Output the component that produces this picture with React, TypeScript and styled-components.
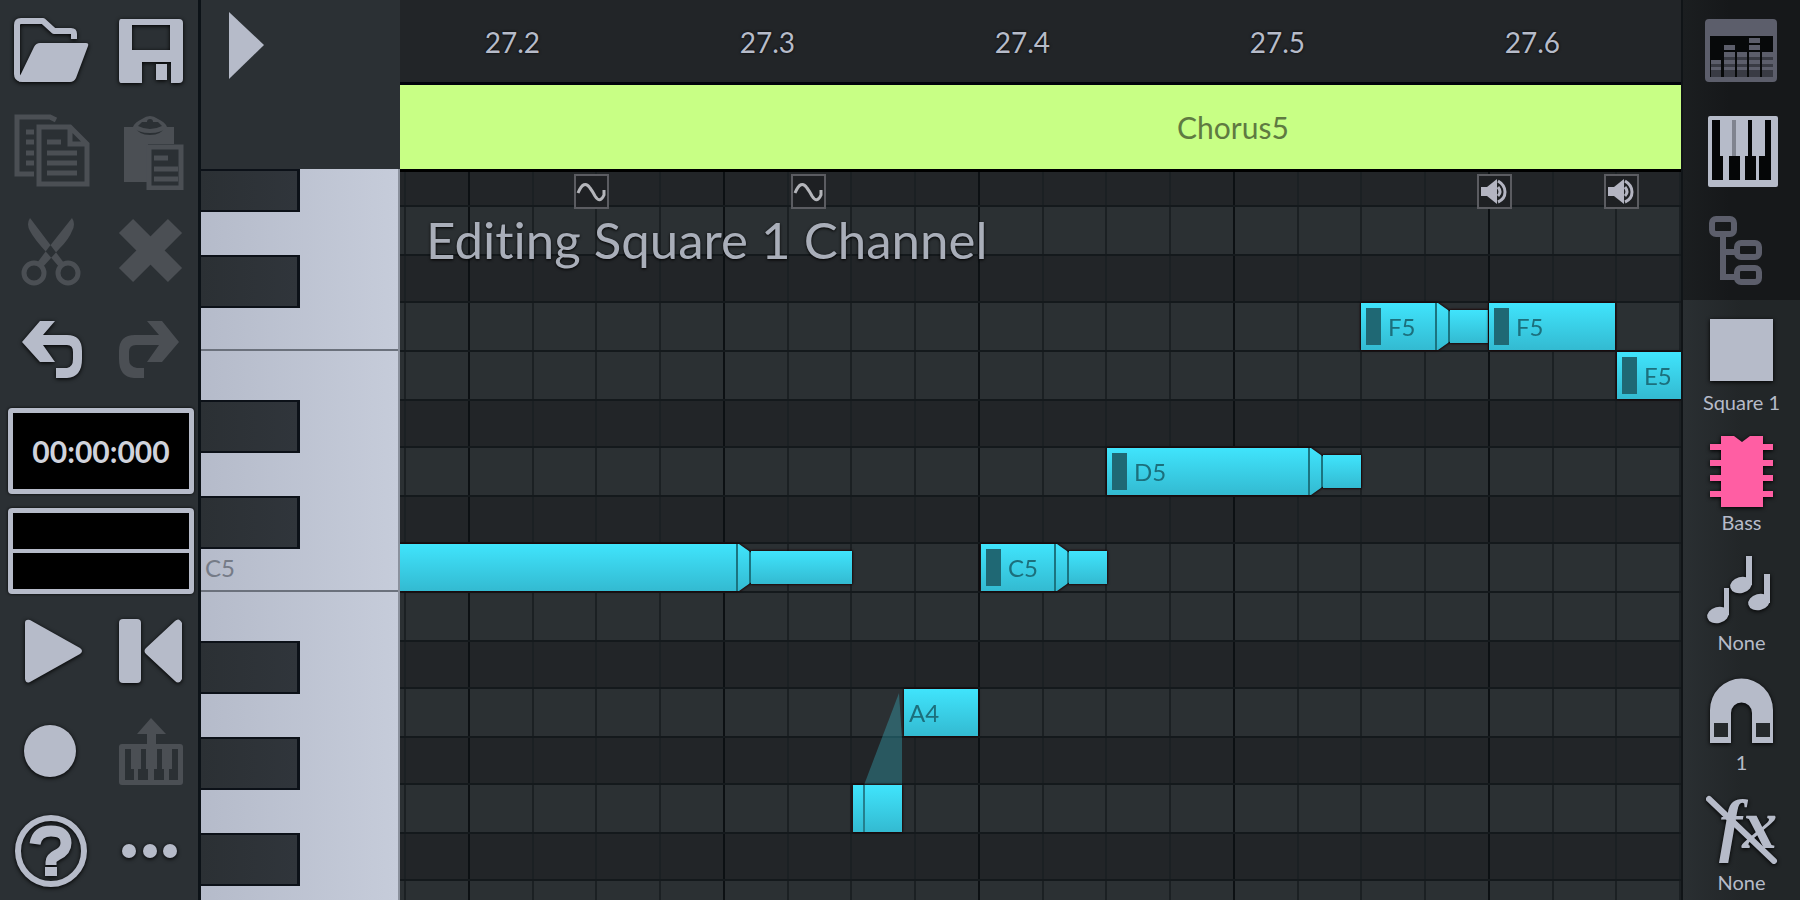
import React from 'react';
import styled, { createGlobalStyle, css } from 'styled-components';

const fg = '#b6bbc9';
const panel = '#2b3034';

const GlobalStyle = createGlobalStyle`
  * { box-sizing: border-box; }
  body { margin: 0; background: #222528; }
  button { border: 0; padding: 0; margin: 0; background: none; color: inherit; font: inherit; cursor: pointer; }
`;

const Shell = styled.div`
  display: grid;
  grid-template-columns: 201px 199px minmax(0, 1fr) 119px;
  height: 100vh;
  overflow: hidden;
  color: ${fg};
  font-family: Lato, 'Liberation Sans', sans-serif;
  font-variant-ligatures: none;
`;

const ToolPanel = styled.aside`
  display: grid;
  grid-template-columns: 100px 98px;
  grid-auto-rows: 100px;
  background: ${panel};
  border-right: 3px solid #0c1217;
`;

const ToolButton = styled.button`
  display: flex;
  align-items: center;
  justify-content: center;
  &:nth-of-type(even) { padding-left: 2px; }
  &:disabled { color: #4b4f54; cursor: default; }
  &:enabled svg { filter: drop-shadow(0 1px 2px #000000); }
`;

const Display = styled.div`
  grid-column: 1 / -1;
  display: flex;
  align-items: center;
  justify-content: center;
  margin: 8px 4px 6px 8px;
  border: 5px solid ${fg};
  border-radius: 4px;
  background: #000000;
  box-shadow: 0 0 3px #000000;
  font-size: 30px;
  line-height: 36px;
  font-weight: 700;
  color: #d0d3dc;
`;

const LevelLine = styled.div`
  flex: 1;
  height: 4px;
  background: ${fg};
`;

const KeyColumn = styled.section`
  display: flex;
  flex-direction: column;
  min-height: 0;
  background: ${panel};
`;

const KeyHeader = styled.div`
  flex: 0 0 169px;
  display: flex;
  align-items: flex-start;
  padding: 10px 27px;
`;

const Keyboard = styled.div`
  flex: 1;
  min-height: 0;
  overflow: hidden;
  background: linear-gradient(90deg, #b5bbca, #c6ccda);
  border-right: 2px solid #8b919d;
`;

const Key = styled.div<{ $height: number; $divided?: boolean }>`
  display: flex;
  align-items: flex-start;
  height: ${(p) => p.$height}px;
  border-bottom: ${(p) => (p.$divided ? '2px solid #6b717c' : '0')};
`;

const BlackKey = styled.div`
  flex: 0 0 99px;
  height: calc(100% + 6px);
  background: linear-gradient(90deg, #2b3034, #30353b);
  border: 2px solid #0c1118;
  border-width: 2px 3px 2px 0;
`;

const KeyName = styled.span`
  padding: 10px 4px;
  font-size: 24px;
  line-height: 30px;
  color: #757b87;
`;

const Main = styled.main`
  display: flex;
  flex-direction: column;
  min-width: 0;
  min-height: 0;
  background: #222528;
`;

const Ruler = styled.div`
  flex: 0 0 85px;
  display: grid;
  grid-template-columns: 6px repeat(20, minmax(0, 1fr));
  align-items: center;
  border-bottom: 3px solid #02040c;
`;

const RulerMark = styled.span<{ $col: number }>`
  grid-row: 1;
  grid-column: ${(p) => p.$col} / span 3;
  padding: 2px 0 0 15px;
  font-size: 28px;
  line-height: 36px;
  text-shadow: 0 0 3px #000000;
`;

const Pattern = styled.button`
  && {
    flex: 0 0 87px;
    display: grid;
    grid-template-columns: 6px repeat(20, minmax(0, 1fr));
    align-items: center;
    background: #c8ff85;
    border-bottom: 3px solid #000000;
    color: #5f7a41;
    text-align: left;
  }
`;

const PatternName = styled.span`
  grid-column: 14 / span 4;
  padding-left: 6px;
  font-size: 30px;
  line-height: 36px;
`;

const Roll = styled.div`
  position: relative;
  flex: 1;
  min-height: 0;
  overflow: hidden;
`;

const Lane = styled.div<{ $height: number; $light: boolean }>`
  position: relative;
  height: ${(p) => p.$height}px;
  background: ${(p) => (p.$light ? '#2b3033' : '#222528')};
  border-bottom: 2px solid #14191c;
`;

const Columns = styled.div`
  position: absolute;
  inset: 0;
  display: grid;
  grid-template-columns: 6px repeat(20, minmax(0, 1fr));
`;

const Column = styled.div<{ $beat: boolean }>`
  border-right: 2px solid ${(p) => (p.$beat ? '#0c1013' : '#1b2023')};
`;

const Title = styled.h1`
  position: absolute;
  left: 26px;
  top: 38px;
  margin: 0;
  font-size: 51px;
  line-height: 60px;
  font-weight: 400;
  white-space: nowrap;
  color: #a9aeb9;
  text-shadow: 0 1px 3px #000000;
`;

const Marker = styled.div`
  position: absolute;
  top: 2px;
  display: flex;
  width: 35px;
  height: 35px;
  border: 2px solid #5b5c61;
  background: #1e2023;
  z-index: 2;
`;

const cyan = css`background: linear-gradient(#40e4fc, #33bad1);`;

const NoteBox = styled.button`
  && {
    position: absolute;
    top: 0;
    bottom: 0;
    display: flex;
    align-items: center;
    z-index: 1;
    filter: drop-shadow(0 0 1px #1c0505) drop-shadow(0 0 1px #1c0505);
  }
`;

const NoteBody = styled.span`
  ${cyan}
  flex: 1;
  align-self: stretch;
  display: flex;
  align-items: center;
  gap: 7px;
  padding: 0 5px;
  font-size: 24px;
  line-height: 30px;
  color: #1c6f7c;
`;

const Velocity = styled.span`
  width: 15px;
  height: 37px;
  background: #1f6874;
`;

const Attack = styled.span`
  flex: 1;
  align-self: stretch;
  margin-left: 5px;
  border-left: 2px solid #24808e;
`;

const Bevel = styled.span`
  ${cyan}
  align-self: stretch;
  width: 15px;
  border: 2px solid #1b7480;
  border-width: 0 2px;
  clip-path: polygon(0 0, 20% 0, 100% 18%, 100% 82%, 20% 100%, 0 100%);
`;

const Tail = styled.span`
  ${cyan}
  height: 33px;
`;

const Glide = styled.svg`
  position: absolute;
  top: 2px;
  width: 40px;
  height: 96px;
  z-index: 1;
`;

const SidePanel = styled.aside`
  display: flex;
  flex-direction: column;
  border-left: 2px solid #101417;
  background: linear-gradient(90deg, #2a2f32, #222628 50%);
`;

const Views = styled.nav`
  display: flex;
  flex-direction: column;
  background: linear-gradient(90deg, #1b1e20, #16181a 40%);
`;

const ViewButton = styled.button<{ $active?: boolean }>`
  && {
    display: flex;
    align-items: center;
    justify-content: center;
    height: 100px;
    color: ${(p) => (p.$active ? '#b6bbc9' : '#5c5e6b')};
  }
`;

const SideButton = styled.button`
  && {
    display: flex;
    flex-direction: column;
    align-items: center;
    height: 120px;
    padding-top: 13px;
    font-size: 20px;
    line-height: 24px;
    color: ${fg};
  }
  svg { overflow: visible; filter: drop-shadow(0 1px 2px #000000); }
`;

const SideLabel = styled.span`
  padding-top: 1px;
`;

const Svg = ({ children, w = 80, h = 80 }: { children: React.ReactNode; w?: number; h?: number }) => (
  <svg width={w} height={h} viewBox={`0 0 ${w} ${h}`} fill="currentColor" aria-hidden="true">{children}</svg>
);

const stroke = (width: number) => ({ fill: 'none', stroke: 'currentColor', strokeWidth: width });

const FolderIcon = () => (
  <Svg>
    <path {...stroke(6)} strokeLinejoin="round" d="M64 29v-5q0-3-3-3H44L33 11H11q-4 0-4 4v49q0 4 4 5" />
    <path d="M30 33h46q3 0 2 3L66 68q-2 4-6 4H12q-5 0-3-4L24 37q2-4 6-4z" />
  </Svg>
);
const SaveIcon = () => (
  <Svg>
    <path fillRule="evenodd" d="M11 9h58q4 0 4 4v56q0 4-4 4H61V52H32v21H11q-2 0-2-4V13q0-4 2-4zM22 15v25h38V15z" />
    <path d="M46 54h11v16H46z" />
  </Svg>
);
const CopyIcon = () => (
  <Svg>
    <path {...stroke(5)} d="M46 10L40 7H7v57h17M29 17h31l17 17v40H29zM60 17v17h17" />
    <path {...stroke(5)} d="M16 22h8M16 32h8M16 43h8M16 53h8M37 32h14M37 43h30M37 53h30M37 63h30" />
  </Svg>
);
const PasteIcon = () => (
  <Svg>
    <path d="M14 17h12q2 8 14 8t14-8h10v17H38v38H14z" />
    <path fillRule="evenodd" d="M23 17q2-5 9-8 8-6 16 0 7 3 9 8-5 6-17 6t-17-6zM28 16q12 6 24 0l-4-4h-5a3 3 0 0 0-6 0h-5z" />
    <path {...stroke(5)} d="M39 37h32v41H39z" />
    <path {...stroke(5)} d="M44 48h14M44 59h24M44 69h24" />
  </Svg>
);
const CutIcon = () => (
  <Svg>
    <path d="M20 8q-4 6 0 13 4 8 18 23l12 14 4-5-6-8zM62 8q4 6 0 13-3 8-12 17L32 58l-5-5 12-16z" />
    <circle cx="24" cy="63" r="10" {...stroke(5)} />
    <circle cx="58" cy="63" r="10" {...stroke(5)} />
  </Svg>
);
const DeleteIcon = () => (
  <Svg><path {...stroke(20)} d="M16 16l49 49M65 16L16 65" /></Svg>
);
const UndoIcon = () => (
  <Svg>
    <path d="M30 11h15L33 25h24q15 0 15 16v8q0 18-15 19H46V58h11q6-1 6-9v-7q0-7-6-7H33l12 17H30L12 32z" />
  </Svg>
);
const RedoIcon = () => (
  <Svg>
    <path d="M52 11H37l12 14H25Q9 25 9 41v8q0 18 15 19h10V58h-7q-8-1-8-9v-7q0-7 7-7h23L37 52h15l17-20z" />
  </Svg>
);
const PlayIcon = () => (
  <Svg><path d="M15 13q0-4 5-3l50 28q4 3 0 6L20 72q-4 2-5-3z" /></Svg>
);
const RewindIcon = () => (
  <Svg>
    <rect x="9" y="9" width="22" height="64" rx="4" />
    <path d="M72 13v56q-3 6-7 2L36 44q-3-3 0-6l29-27q4-4 7 2z" />
  </Svg>
);
const RecordIcon = () => <Svg><circle cx="40" cy="41" r="26" /></Svg>;
const KeyboardUpIcon = () => (
  <Svg>
    <path d="M41 8l15 16h-10v12h-9V24H27z" />
    <path fillRule="evenodd" d="M12 34h58q3 0 3 3v35q0 3-3 3H12q-3 0-3-3V37q0-3 3-3zM15 39v31h9V59h-3V39zM31 39v20h-3v11h10V59h-2V39zM47 39v20h-3v11h10V59h-2V39zM62 39v20h-3v11h9V39z" />
  </Svg>
);
const HelpIcon = () => (
  <Svg>
    <circle cx="41" cy="41" r="33" {...stroke(6)} />
    <path {...stroke(11)} d="M25 34q2-13 16-13 15 0 15 12 0 8-9 12-6 3-6 7v3" />
    <path d="M35 57h12v9H35z" />
  </Svg>
);
const MoreIcon = () => (
  <Svg>
    <circle cx="19" cy="41" r="7" /><circle cx="40" cy="41" r="7" /><circle cx="60" cy="41" r="7" />
  </Svg>
);
const MixerIcon = () => (
  <Svg>
    <path fillRule="evenodd" d="M7 9h64q4 0 4 4v55q0 4-4 4H7q-4 0-4-4V13q0-4 4-4zM8 26v41h63V26z" />
    <path fill="#07090a" d="M8 26h63v41H8z" />
    <path fillOpacity="0.6" d="M9 50h10v17H9zM22 42h11v25H22zM35 42h10v25H35zM47 42h11v25H47zM60 42h11v25H60z" />
    <path d="M9 50h10v4H9zM9 57h10v3H9zM22 35h11v5H22zM22 42h11v5H22zM22 50h11v4H22zM22 57h11v3H22zM35 42h10v5H35zM35 50h10v4H35zM35 57h10v3H35zM47 28h11v5H47zM47 35h11v5H47zM47 42h11v5H47zM47 50h11v4H47zM47 57h11v3H47zM60 42h11v5H60zM60 50h11v4H60zM60 57h11v3H60z" />
  </Svg>
);
const PianoIcon = () => (
  <Svg>
    <path d="M8 6h66q2 0 2 2v67q0 2-2 2H8q-2 0-2-2V8q0-2 2-2z" />
    <path fill="#050607" d="M10 10h8v36h3v24H10zM27 46h11v24H27zM46 10h4v36h4v24H43V46h3zM63 10h6v60H57V46h6z" />
    <path fill="#80848f" d="M30 10h4v36h-4z" />
  </Svg>
);
const TreeIcon = () => (
  <Svg>
    <path {...stroke(6)} d="M21 27v40h14M21 42h14" />
    <rect x="10" y="9" width="22" height="15" rx="4" {...stroke(6)} />
    <rect x="35" y="33" width="22" height="14" rx="4" {...stroke(6)} />
    <rect x="35" y="58" width="22" height="14" rx="4" {...stroke(6)} />
  </Svg>
);
const SquareIcon = () => <Svg w={76} h={76}><path d="M6 6h63v62H6z" /></Svg>;
const ChipIcon = () => (
  <Svg w={76} h={76}>
    <path fill="#ff5ea3" d="M17 3h13l8 6 8-6h13v8h10v6h-10v10h10v6h-10v9h10v6h-10v10h10v6h-10v10H17V64H6v-6h11V48H6v-6h11V33H6v-6h11V17H6v-6h11z" />
  </Svg>
);
const NotesIcon = () => (
  <Svg w={76} h={76}>
    <ellipse cx="14" cy="62" rx="11" ry="8" transform="rotate(-15 14 62)" />
    <ellipse cx="37" cy="32" rx="11" ry="8" transform="rotate(-15 37 32)" />
    <ellipse cx="55" cy="49" rx="11" ry="8" transform="rotate(-15 55 49)" />
    <path d="M20 35h5v27h-5zM42 3h6v29h-6zM60 21h6v29h-6z" />
  </Svg>
);
const MagnetIcon = () => (
  <Svg w={76} h={76}>
    <path d="M6 70V37a31 31 0 0 1 63 0v33H48V40a10 10 0 0 0-21 0v30z" />
    <path fill="#25292c" d="M10 50h14v14H10zM52 50h14v14H52z" />
  </Svg>
);
const FxIcon = () => (
  <Svg w={76} h={76}>
    <text x="15" y="55" fontFamily="'Liberation Serif', serif" fontSize="70" fontStyle="italic" fontWeight="700">fx</text>
    <path {...stroke(6)} strokeLinecap="round" d="M5 6l65 62" />
  </Svg>
);
const WaveIcon = () => (
  <svg width="31" height="31" viewBox="0 0 31 31" fill="none" stroke="#b4b5ba" strokeWidth="3" aria-hidden="true">
    <path d="M2 17Q8 3 14 12q3 4 5 8 5 8 9-1v-5" />
  </svg>
);
const SpeakerIcon = () => (
  <svg width="31" height="31" viewBox="0 0 31 31" fill="#b4b5c2" aria-hidden="true">
    <path d="M2 11h6L18 3v25l-10-8H2z" />
    <path fill="none" stroke="#b4b5c2" strokeWidth="3" d="M19 5q7 4 7 11t-7 10M19 11q4 5 0 9" />
  </svg>
);

const tools = [
  { name: 'Open', Icon: FolderIcon }, { name: 'Save', Icon: SaveIcon },
  { name: 'Copy', Icon: CopyIcon, off: true }, { name: 'Paste', Icon: PasteIcon, off: true },
  { name: 'Cut', Icon: CutIcon, off: true }, { name: 'Delete', Icon: DeleteIcon, off: true },
  { name: 'Undo', Icon: UndoIcon }, { name: 'Redo', Icon: RedoIcon, off: true },
];
const transport = [
  { name: 'Play', Icon: PlayIcon }, { name: 'Rewind', Icon: RewindIcon },
  { name: 'Record', Icon: RecordIcon }, { name: 'Keyboard input', Icon: KeyboardUpIcon, off: true },
  { name: 'Help', Icon: HelpIcon }, { name: 'More', Icon: MoreIcon },
];
const views = [
  { name: 'Mixer', Icon: MixerIcon }, { name: 'Piano roll', Icon: PianoIcon, active: true }, { name: 'Routing', Icon: TreeIcon },
];
const settings = [
  { label: 'Square 1', Icon: SquareIcon }, { label: 'Bass', Icon: ChipIcon }, { label: 'None', Icon: NotesIcon },
  { label: '1', Icon: MagnetIcon }, { label: 'None', Icon: FxIcon },
];

type NoteData = { start: number; end: number; label?: string; velocity?: boolean; tail?: number; attack?: boolean };

const notes: Record<string, NoteData[]> = {
  F5: [
    { start: 961, end: 1088, label: 'F5', velocity: true, tail: 38 },
    { start: 1089, end: 1215, label: 'F5', velocity: true },
  ],
  E5: [{ start: 1217, end: 1281, label: 'E5', velocity: true }],
  D5: [{ start: 707, end: 961, label: 'D5', velocity: true, tail: 38 }],
  C5: [
    { start: 0, end: 452, tail: 101 },
    { start: 581, end: 707, label: 'C5', velocity: true, tail: 38 },
  ],
  A4: [{ start: 504, end: 578, label: 'A4' }],
  G4: [{ start: 453, end: 502, attack: true }],
};

const SPAN = 1281;
const at = (units: number) => `${(units / SPAN) * 100}%`;

const pitches = ['G#5', 'G5', 'F#5', 'F5', 'E5', 'D#5', 'D5', 'C#5', 'C5', 'B4', 'A#4', 'A4', 'G#4', 'G4', 'F#4', 'F4'];
const isBlack = (p: string) => p.includes('#');
const rowHeight = (p: string, i: number) => (i === 0 ? 35 : isBlack(p) ? 47 : 49);

const Note = ({ note }: { note: NoteData }) => (
  <NoteBox aria-label={`Note ${note.label ?? ''}`} style={{ left: at(note.start), width: at(note.end - note.start) }}>
    <NoteBody>
      {note.velocity && <Velocity />}
      {note.attack && <Attack />}
      {note.label}
    </NoteBody>
    {note.tail && <Bevel />}
    {note.tail && <Tail style={{ width: at(note.tail * (SPAN / (note.end - note.start))) }} />}
  </NoteBox>
);

const ToolList = ({ items }: { items: { name: string; Icon: React.FC; off?: boolean }[] }) => (
  <>
    {items.map(({ name, Icon, off }) => (
      <ToolButton key={name} aria-label={name} disabled={off}><Icon /></ToolButton>
    ))}
  </>
);

export default function App() {
  return (
    <>
      <GlobalStyle />
      <Shell>
        <ToolPanel>
          <ToolList items={tools} />
          <Display>00:00:000</Display>
          <Display><LevelLine /></Display>
          <ToolList items={transport} />
        </ToolPanel>

        <KeyColumn>
          <KeyHeader>
            <button aria-label="Expand">
              <svg width="38" height="72" viewBox="0 0 38 72" fill={fg} aria-hidden="true"><path d="M1 2l35 33L1 69z" /></svg>
            </button>
          </KeyHeader>
          <Keyboard>
            {pitches.map((p, i) => (
              <Key key={p} $height={rowHeight(p, i) + (i === 0 ? 2 : 0)} $divided={p === 'F5' || p === 'C5'}>
                {isBlack(p) && <BlackKey />}
                {p === 'C5' && <KeyName>C5</KeyName>}
              </Key>
            ))}
          </Keyboard>
        </KeyColumn>

        <Main>
          <Ruler>
            {['27.2', '27.3', '27.4', '27.5', '27.6'].map((m, i) => (
              <RulerMark key={m} $col={3 + i * 4}>{m}</RulerMark>
            ))}
          </Ruler>
          <Pattern><PatternName>Chorus5</PatternName></Pattern>
          <Roll>
            {pitches.map((p, i) => (
              <Lane key={p} $height={rowHeight(p, i)} $light={!isBlack(p)}>
                <Columns>
                  {Array.from({ length: 21 }, (_, c) => <Column key={c} $beat={c % 4 === 1} />)}
                </Columns>
                {(notes[p] ?? []).map((n) => <Note key={n.start} note={n} />)}
                {p === 'A4' && (
                  <Glide viewBox="0 0 40 96" style={{ left: at(464) }}>
                    <path fill="#3ccfe6" fillOpacity="0.3" d="M0 94L35 2l3 46v46z" />
                  </Glide>
                )}
              </Lane>
            ))}
            <Marker style={{ left: at(174) }}><WaveIcon /></Marker>
            <Marker style={{ left: at(391) }}><WaveIcon /></Marker>
            <Marker style={{ left: at(1077) }}><SpeakerIcon /></Marker>
            <Marker style={{ left: at(1204) }}><SpeakerIcon /></Marker>
            <Title>Editing Square 1 Channel</Title>
          </Roll>
        </Main>

        <SidePanel>
          <Views>
            {views.map(({ name, Icon, active }) => (
              <ViewButton key={name} aria-label={name} $active={active}><Icon /></ViewButton>
            ))}
          </Views>
          {settings.map(({ label, Icon }, i) => (
            <SideButton key={i}><Icon /><SideLabel>{label}</SideLabel></SideButton>
          ))}
        </SidePanel>
      </Shell>
    </>
  );
}
